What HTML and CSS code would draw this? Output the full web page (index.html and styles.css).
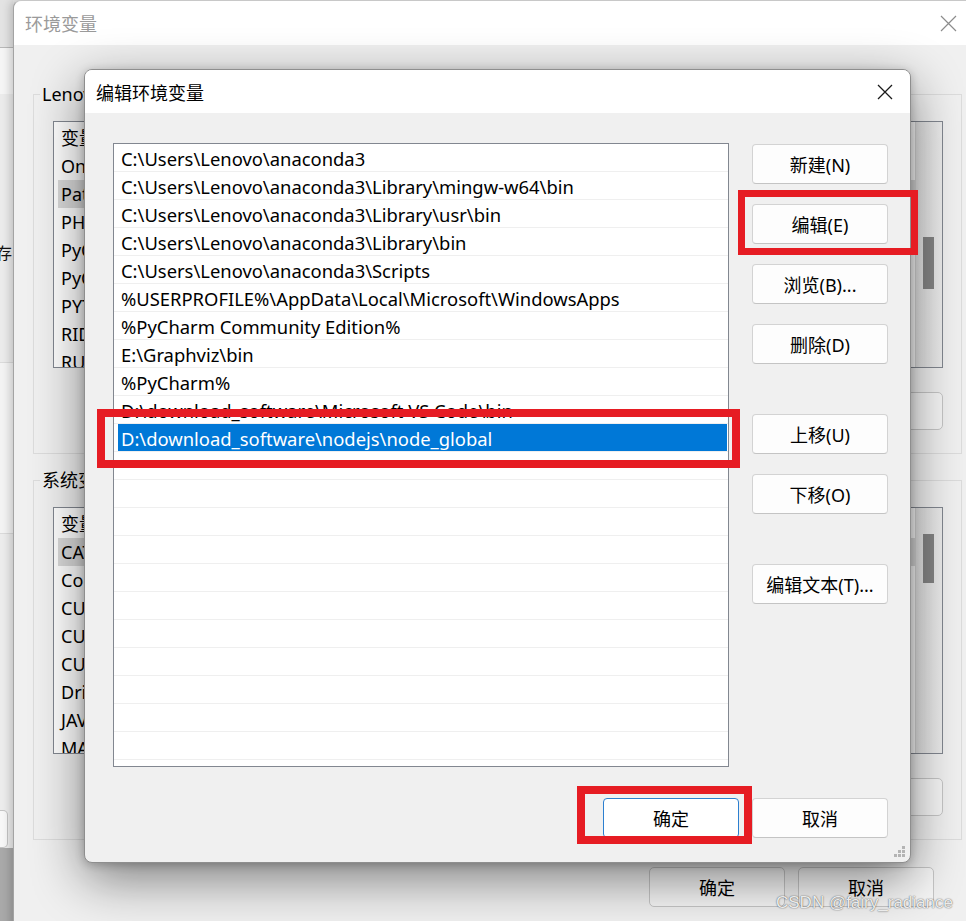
FILE: index.html
```html
<!DOCTYPE html>
<html lang="zh-CN">
<head>
<meta charset="utf-8">
<title>编辑环境变量</title>
<link rel="stylesheet" href="styles.css">
</head>
<body>
<div class="desk">
  <div class="backwin">
    <div class="bw-title"></div>
    <div class="bw-line"></div>
    <div class="bw-a"></div>
    <div class="bw-b"><span class="bw-text">们存</span></div>
    <div class="bw-line light"></div>
    <div class="bw-c"></div>
    <div class="bw-line light"></div>
    <div class="bw-d"></div>
    <div class="bw-e"><div class="bw-btn"></div></div>
    <div class="bw-f"></div>
  </div>

  <div class="envwin">
    <div class="ew-title">
      <span class="ew-name">环境变量</span>
      <svg class="ew-close" width="17" height="17" viewBox="0 0 17 17"><path d="M1 1L16 16M16 1L1 16" stroke="#8c8c8c" stroke-width="1.2" fill="none"/></svg>
    </div>
    <div class="ew-body">
      <fieldset class="grp">
        <legend>Lenovo 的用户变量(U)</legend>
        <div class="vlist">
          <div class="vl-rows">
            <div class="vl-row"><span>变量</span><span>值</span></div>
            <div class="vl-row"><span>OneDrive</span><span>C:\Users\Lenovo\OneDrive</span></div>
            <div class="vl-row sel"><span>Path</span><span>C:\Users\Lenovo\anaconda3</span></div>
            <div class="vl-row"><span>PHPSTORM</span><span>D:\PhpStorm\bin</span></div>
            <div class="vl-row"><span>PyCharm</span><span>D:\PyCharm\bin</span></div>
            <div class="vl-row"><span>PyCharm Community Edition</span><span>D:\PyCharm CE\bin</span></div>
            <div class="vl-row"><span>PYTHONPATH</span><span>C:\Python</span></div>
            <div class="vl-row"><span>RIDER</span><span>D:\Rider\bin</span></div>
            <div class="vl-row"><span>RUBYMINE</span><span>D:\RubyMine\bin</span></div>
          </div>
          <div class="vscroll"><div class="thumb t1"></div></div>
        </div>
        <div class="grp-btns">
          <button class="obtn">新建(N)...</button>
          <button class="obtn">编辑(E)...</button>
          <button class="obtn">删除(D)</button>
        </div>
      </fieldset>

      <fieldset class="grp grp2">
        <legend>系统变量(S)</legend>
        <div class="vlist">
          <div class="vl-rows">
            <div class="vl-row"><span>变量</span><span>值</span></div>
            <div class="vl-row sel"><span>CATALINA_HOME</span><span>D:\tomcat</span></div>
            <div class="vl-row"><span>ComSpec</span><span>C:\Windows\system32\cmd.exe</span></div>
            <div class="vl-row"><span>CUDA_PATH</span><span>C:\CUDA</span></div>
            <div class="vl-row"><span>CUDA_PATH_V11</span><span>C:\CUDA\v11</span></div>
            <div class="vl-row"><span>CUDNN</span><span>C:\CUDA\cudnn</span></div>
            <div class="vl-row"><span>DriverData</span><span>C:\Windows\System32\Drivers\DriverData</span></div>
            <div class="vl-row"><span>JAVA_HOME</span><span>D:\Java\jdk</span></div>
            <div class="vl-row"><span>MAVEN_HOME</span><span>D:\maven</span></div>
          </div>
          <div class="vscroll"><div class="thumb t2"></div></div>
        </div>
        <div class="grp-btns">
          <button class="obtn">新建(W)...</button>
          <button class="obtn">编辑(I)...</button>
          <button class="obtn">删除(L)</button>
        </div>
      </fieldset>

      <div class="ew-foot">
        <button class="obtn big">确定</button>
        <button class="obtn big">取消</button>
      </div>
    </div>
  </div>

  <div class="dlg">
    <div class="dlg-title">
      <span>编辑环境变量</span>
      <svg class="dlg-close" width="16" height="16" viewBox="0 0 16 16"><path d="M1 1L15 15M15 1L1 15" stroke="#1a1a1a" stroke-width="1.3" fill="none"/></svg>
    </div>
    <div class="dlg-body">
      <div class="plist">
        <div class="prow"><span>C:\Users\Lenovo\anaconda3</span></div>
        <div class="prow"><span>C:\Users\Lenovo\anaconda3\Library\mingw-w64\bin</span></div>
        <div class="prow"><span>C:\Users\Lenovo\anaconda3\Library\usr\bin</span></div>
        <div class="prow"><span>C:\Users\Lenovo\anaconda3\Library\bin</span></div>
        <div class="prow"><span>C:\Users\Lenovo\anaconda3\Scripts</span></div>
        <div class="prow"><span>%USERPROFILE%\AppData\Local\Microsoft\WindowsApps</span></div>
        <div class="prow"><span>%PyCharm Community Edition%</span></div>
        <div class="prow"><span>E:\Graphviz\bin</span></div>
        <div class="prow"><span>%PyCharm%</span></div>
        <div class="prow"><span>D:\download_software\Microsoft VS Code\bin</span></div>
        <div class="prow sel"><span>D:\download_software\nodejs\node_global</span></div>
        <div class="prow"><span></span></div>
        <div class="prow"><span></span></div>
        <div class="prow"><span></span></div>
        <div class="prow"><span></span></div>
        <div class="prow"><span></span></div>
        <div class="prow"><span></span></div>
        <div class="prow"><span></span></div>
        <div class="prow"><span></span></div>
        <div class="prow"><span></span></div>
        <div class="prow"><span></span></div>
        <div class="prow"><span></span></div>
        <div class="prow"><span></span></div>
      </div>
      <div class="bcol">
        <button class="btn">新建(N)</button>
        <button class="btn">编辑(E)</button>
        <button class="btn">浏览(B)...</button>
        <button class="btn">删除(D)</button>
        <button class="btn sp">上移(U)</button>
        <button class="btn">下移(O)</button>
        <button class="btn sp">编辑文本(T)...</button>
      </div>
      <div class="dlg-foot">
        <button class="btn primary">确定</button>
        <button class="btn">取消</button>
      </div>
    </div>
    <svg class="grip" width="12" height="12" viewBox="0 0 12 12">
      <rect x="8" y="0" width="3" height="3" fill="#b4b4b4"/>
      <rect x="4" y="4" width="3" height="3" fill="#b4b4b4"/>
      <rect x="8" y="4" width="3" height="3" fill="#b4b4b4"/>
      <rect x="0" y="8" width="3" height="3" fill="#b4b4b4"/>
      <rect x="4" y="8" width="3" height="3" fill="#b4b4b4"/>
      <rect x="8" y="8" width="3" height="3" fill="#b4b4b4"/>
    </svg>
  </div>

  <div class="mark mark-edit"></div>
  <div class="mark mark-row"></div>
  <div class="mark mark-ok"></div>

  <div class="wm">CSDN @fairy_radiance</div>
</div>
</body>
</html>
```

FILE: styles.css
```css
* { box-sizing: border-box; }
html, body { margin: 0; padding: 0; }
body {
  width: 966px;
  height: 921px;
  overflow: hidden;
  font-family: "Noto Sans", "Noto Sans CJK SC", sans-serif;
  font-size: 18px;
  color: #000;
  background: #e8e8e8;
}
.desk { position: relative; width: 966px; height: 921px; overflow: hidden; }

/* window far behind (left strip) */
.backwin {
  position: absolute; left: 0; top: 0; width: 13px; height: 921px;
  display: flex; flex-direction: column; overflow: hidden;
  background: #efefef;
}
.bw-title { height: 47px; background: #e3e3e3; }
.bw-line { height: 1px; background: #b8b8b8; }
.bw-line.light { background: #dadada; }
.bw-a { height: 46px; background: #f5f5f5; }
.bw-b { height: 268px; background: #ebebeb; position: relative; }
.bw-text { display: block; margin: 146px 0 0 -20px; font-size: 16px; color: #111; white-space: nowrap; }
.bw-c { height: 170px; background: #f3f3f3; }
.bw-d { height: 262px; background: #ececec; }
.bw-e { height: 52px; background: #ececec; padding-top: 14px; }
.bw-btn { width: 8px; height: 38px; border: 1px solid #c4c4c4; border-left: none; border-radius: 0 5px 5px 0; background: #f7f7f7; }
.bw-f { flex: 1; background: #a9a9a9; }

/* the 环境变量 window */
.envwin {
  position: absolute; left: 13px; top: 0; width: 960px; height: 940px;
  background: #f0f0f0;
  border-left: 1px solid #a3a3a3;
  border-top: 1px solid #c8c8c8;
  border-top-left-radius: 8px;
  box-shadow: -3px 0 8px rgba(0,0,0,.18);
  display: flex; flex-direction: column;
}
.ew-title {
  height: 44px; flex: none; background: #fff;
  border-top-left-radius: 8px;
  display: flex; align-items: center; justify-content: space-between;
  padding: 0 16px 0 11px;
}
.ew-name { color: #9a9a9a; font-size: 18px; }
.ew-body { padding: 0 11px 0 19px; display: flex; flex-direction: column; }

.grp {
  margin: 37px 0 0 0;
  padding: 15px 18px 23px 19px;
  border: 1px solid #dcdcdc;
  min-width: 0;
}
.grp2 { margin-top: 14px; }
.grp legend {
  font-size: 18px; line-height: 24px;
  padding: 0 3px 0 2px; margin-left: -13px;
  white-space: nowrap;
}
.vlist {
  height: 247px; display: flex;
  border: 1px solid #828790; background: #fff;
}
.vl-rows { flex: 1; padding-top: 2px; overflow: hidden; min-width: 0; }
.vl-row {
  height: 28px; line-height: 28px; margin-left: 4px; padding-left: 3px;
  display: grid; grid-template-columns: 260px 1fr; white-space: nowrap;
}
.vl-row.sel { background: #dadada; }
.vscroll { width: 27px; flex: none; background: linear-gradient(90deg, #e2e2e2, #ececec); border-left: 1px solid #d8d8d8; }
.thumb { width: 11px; margin-left: 7px; background: #858585; }
.t1 { margin-top: 115px; height: 52px; }
.t2 { margin-top: 26px; height: 49px; }

.grp-btns { display: flex; justify-content: flex-end; gap: 14px; margin-top: 24px; }
.obtn {
  width: 136px; height: 38px;
  border: 1px solid #c6c6c6; border-radius: 5px;
  background: #f6f6f6; color: #000;
  font-family: inherit; font-size: 18px; padding: 0;
}
.obtn.big { height: 40px; }
.ew-foot { display: flex; justify-content: flex-end; gap: 13px; margin-top: 27px; padding-right: 28px; }

/* the edit dialog */
.dlg {
  position: absolute; left: 84px; top: 69px; width: 827px; height: 794px;
  border: 1px solid #8e8e8e; border-radius: 8px;
  background: #f0f0f0;
  box-shadow: 0 16px 52px rgba(0,0,0,.48), 0 2px 10px rgba(0,0,0,.22);
  display: flex; flex-direction: column;
}
.dlg-title {
  height: 43px; flex: none; background: #fff;
  border-radius: 7px 7px 0 0;
  display: flex; align-items: center; justify-content: space-between;
  padding: 0 17px 0 11px;
  font-size: 18px;
}
.dlg-body {
  display: grid;
  grid-template-columns: 616px 136px;
  grid-template-rows: 624px auto;
  column-gap: 23px; row-gap: 31px;
  padding: 30px 22px 0 28px;
}
.plist {
  border: 1px solid #828790; background: #fff; overflow: hidden;
  font-size: 18.4px;
}
.prow {
  height: 28px; border-bottom: 1px solid #efefef;
  padding: 0 1px 0 4px;
}
.prow span {
  display: block; height: 27px; line-height: 25px; padding: 2px 0 0 3px;
  white-space: nowrap;
}
.prow.sel span { background: #0078d7; color: #fff; }

.bcol { display: flex; flex-direction: column; gap: 20px; padding-top: 1px; }
.btn {
  width: 136px; height: 40px;
  border: 1px solid #d3d3d3; border-bottom-color: #c4c4c4; border-radius: 4px;
  background: #fdfdfd; color: #000;
  font-family: inherit; font-size: 18px; padding: 0;
}
.btn.sp { margin-top: 30px; }
.btn.primary { border: 1px solid #2c7fd0; background: #fff; }
.dlg-foot { grid-column: 1 / -1; justify-self: end; display: flex; gap: 13px; }

.grip { position: absolute; right: 4px; bottom: 4px; }

/* red annotation boxes */
.mark { position: absolute; border: 8px solid #e61c23; }
.mark-edit { left: 738px; top: 190px; width: 180px; height: 65px; border-width: 7px; }
.mark-row { left: 97px; top: 409px; width: 643px; height: 59px; }
.mark-ok { left: 577px; top: 786px; width: 175px; height: 58px; }

.wm {
  position: absolute; left: 776px; top: 893px;
  font-family: "Liberation Sans", sans-serif; font-size: 17px;
  color: rgba(255,255,255,.9);
  text-shadow: 0 0 1px rgba(0,0,0,.6), 0 0 2px rgba(0,0,0,.3);
  white-space: nowrap;
}
```
